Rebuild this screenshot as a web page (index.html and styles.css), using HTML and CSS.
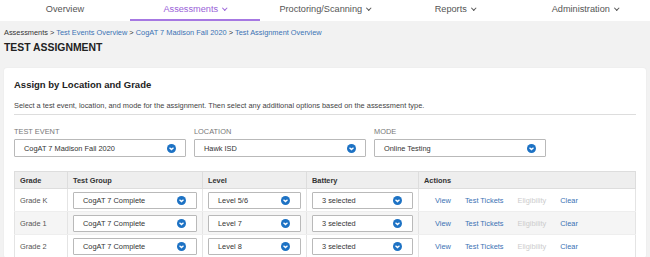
FILE: index.html
```html
<!DOCTYPE html>
<html lang="en">
  <head>
    <meta charset="UTF-8" />
    <meta name="viewport" content="width=device-width, initial-scale=1.0" />
    <title>Test Assignment</title>
    <link rel="stylesheet" href="styles.css">
  </head>
  <body>
    <nav class="top-nav">
      <a href="#" class="nav-item">Overview</a>
      <a href="#" class="nav-item active">Assessments <span class="caret"></span></a>
      <a href="#" class="nav-item">Proctoring/Scanning <span class="caret"></span></a>
      <a href="#" class="nav-item">Reports <span class="caret"></span></a>
      <a href="#" class="nav-item">Administration <span class="caret"></span></a>
    </nav>

    <main class="page">
      <div class="breadcrumb">
        <span>Assessments</span> &gt;
        <a href="#">Test Events Overview</a> &gt;
        <a href="#">CogAT 7 Madison Fall 2020</a> &gt;
        <a href="#">Test Assignment Overview</a>
      </div>
      <h1 class="page-title">TEST ASSIGNMENT</h1>

      <section class="card">
        <h2 class="card-title">Assign by Location and Grade</h2>
        <p class="card-desc">Select a test event, location, and mode for the assignment. Then select any additional options based on the assessment type.</p>

        <div class="fields">
          <div class="field">
            <div class="field-label">TEST EVENT</div>
            <div class="select">CogAT 7 Madison Fall 2020<span class="select-icon"></span></div>
          </div>
          <div class="field">
            <div class="field-label">LOCATION</div>
            <div class="select">Hawk ISD<span class="select-icon"></span></div>
          </div>
          <div class="field">
            <div class="field-label">MODE</div>
            <div class="select">Online Testing<span class="select-icon"></span></div>
          </div>
        </div>

        <table class="grade-table">
          <colgroup>
            <col class="col-grade" />
            <col class="col-group" />
            <col class="col-level" />
            <col class="col-battery" />
            <col />
          </colgroup>
          <thead>
            <tr>
              <th>Grade</th>
              <th>Test Group</th>
              <th>Level</th>
              <th>Battery</th>
              <th>Actions</th>
            </tr>
          </thead>
          <tbody id="grade-rows"></tbody>
        </table>
      </section>
    </main>

    <script>
      const rows = [
        { grade: "Grade K", group: "CogAT 7 Complete", level: "Level 5/6", battery: "3 selected" },
        { grade: "Grade 1", group: "CogAT 7 Complete", level: "Level 7", battery: "3 selected" },
        { grade: "Grade 2", group: "CogAT 7 Complete", level: "Level 8", battery: "3 selected" },
      ];

      const icon =
        '<span class="select-icon"><svg viewBox="0 0 10 10" width="9" height="9"><circle cx="5" cy="5" r="5" fill="#1d72c4"/><path d="M2.8 4.1 L5 6.2 L7.2 4.1" fill="none" stroke="#fff" stroke-width="1.4"/></svg></span>';

      document.querySelectorAll(".select-icon").forEach((el) => {
        el.outerHTML = icon;
      });

      const body = document.getElementById("grade-rows");
      rows.forEach((row) => {
        const tr = document.createElement("tr");
        tr.innerHTML = `
          <td>${row.grade}</td>
          <td><div class="select">${row.group}${icon}</div></td>
          <td><div class="select">${row.level}${icon}</div></td>
          <td><div class="select">${row.battery}${icon}</div></td>
          <td>
            <div class="actions">
              <a href="#">View</a>
              <a href="#">Test Tickets</a>
              <span class="disabled">Eligibility</span>
              <a href="#">Clear</a>
            </div>
          </td>`;
        body.appendChild(tr);
      });
    </script>
  </body>
</html>
```

FILE: styles.css
```css
* {
  margin: 0;
  padding: 0;
  box-sizing: border-box;
}

body {
  font-family: "Liberation Sans", Arial, sans-serif;
  background: #f2f2f2;
  color: #333333;
  font-size: 7.4px;
}

a {
  color: #3a72b4;
  text-decoration: none;
}

/* Top navigation */
.top-nav {
  display: grid;
  grid-template-columns: repeat(5, 1fr);
  height: 21px;
  background: #ffffff;
}

.nav-item {
  display: flex;
  align-items: center;
  justify-content: center;
  gap: 5px;
  color: #555555;
  font-size: 9.2px;
  padding-bottom: 2px;
  border-bottom: 2px solid transparent;
}

.nav-item.active {
  color: #9a63d8;
  border-bottom-color: #a678e2;
}

.caret {
  width: 3.5px;
  height: 3.5px;
  border-right: 1px solid currentColor;
  border-bottom: 1px solid currentColor;
  transform: rotate(45deg);
  margin-top: -2px;
}

/* Page */
.page {
  padding: 0 4px;
}

.breadcrumb {
  margin-top: 6px;
  line-height: 12px;
  color: #333333;
}

.page-title {
  font-size: 10.4px;
  font-weight: 700;
  line-height: 14px;
  margin-top: 2px;
  color: #222222;
}

.card {
  margin-top: 13px;
  background: #ffffff;
  border-radius: 3px;
  padding: 10px 10px 0;
  box-shadow: 0 0 2px rgba(0, 0, 0, 0.06);
}

.card-title {
  font-size: 9.5px;
  font-weight: 700;
  line-height: 14px;
  color: #222222;
}

.card-desc {
  margin-top: 8px;
  line-height: 12px;
  padding-bottom: 2px;
  border-bottom: 1px solid #dddddd;
  color: #444444;
}

.fields {
  display: grid;
  grid-template-columns: 172px 172px 172px;
  gap: 8px;
  margin-top: 11px;
}

.field-label {
  line-height: 11px;
  color: #777777;
  margin-bottom: 2px;
}

.select {
  display: flex;
  align-items: center;
  justify-content: space-between;
  height: 18px;
  border: 1px solid #b9b9b9;
  border-radius: 1px;
  padding: 0 9px;
  color: #333333;
  background: #ffffff;
}

.select-icon {
  display: flex;
}

/* Grade table */
.grade-table {
  margin-top: 14px;
  width: 622px;
  border-collapse: collapse;
  table-layout: fixed;
}

.col-grade {
  width: 53px;
}

.col-group {
  width: 135px;
}

.col-level {
  width: 104px;
}

.col-battery {
  width: 112px;
}

.grade-table th {
  background: #eeeeee;
  text-align: left;
  font-weight: 700;
  color: #333333;
  height: 17px;
  padding: 0 5px;
  border: 1px solid #dddddd;
}

.grade-table td {
  height: 23px;
  padding: 0 5px;
  color: #555555;
  border-left: 1px solid #e4e4e4;
  border-right: 1px solid #e4e4e4;
  border-bottom: 1px solid #eeeeee;
}

.grade-table tbody tr:nth-child(2) td {
  background: #f5f5f5;
}

.grade-table .select {
  height: 17px;
  padding-right: 10px;
}

.actions {
  display: flex;
  gap: 14px;
  padding-left: 11px;
}

.actions .disabled {
  color: #cccccc;
}
```
